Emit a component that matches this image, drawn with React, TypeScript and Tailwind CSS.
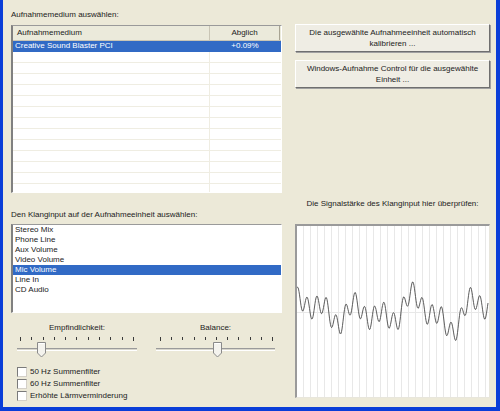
const font = "font-['Liberation_Sans',Arial,sans-serif]";

const inputs = [
  "Stereo Mix",
  "Phone Line",
  "Aux Volume",
  "Video Volume",
  "Mic Volume",
  "Line In",
  "CD Audio",
];

function wavePath() {
  const pts: string[] = [];
  for (let x = 0; x <= 191; x += 0.5) {
    const v =
      10 * Math.sin((2 * Math.PI * x) / 9.6 + 1.2) +
      9 * Math.sin((2 * Math.PI * x) / 58 + 1) +
      8 * Math.sin((2 * Math.PI * x) / 29 + 2) +
      6 * Math.sin((2 * Math.PI * x) / 87);
    pts.push(`${x === 0 ? "M" : "L"}${x.toFixed(1)},${(86 - v).toFixed(1)}`);
  }
  return pts.join(" ");
}

function Slider({
  label,
  width,
  tickOffset,
  tickWidth,
  thumb,
}: {
  label: string;
  width: number;
  tickOffset: number;
  tickWidth: number;
  thumb: number;
}) {
  return (
    <div className="flex flex-col" style={{ width }}>
      <div className="text-center h-[10px]">{label}</div>
      <div className="relative h-[24px]">
        <div
          className="absolute top-[4px] flex justify-between"
          style={{ left: tickOffset, width: tickWidth }}
        >
          {Array.from({ length: 11 }).map((_, i) => (
            <div
              key={i}
              className={`w-px bg-[#3a3a3a] ${i === 0 || i === 10 ? "h-[4px]" : "h-[3px]"}`}
            />
          ))}
        </div>
        <div className="absolute left-0 right-0 top-[15px] h-[3px] border-t border-t-[#9a9a9a] border-b border-b-white bg-[#d8d6cc]" />
        <svg
          className="absolute top-[9px]"
          style={{ left: thumb }}
          width="9"
          height="16"
          viewBox="0 0 9 16"
        >
          <polygon
            points="0.5,0.5 8.5,0.5 8.5,11 4.5,15 0.5,11"
            fill="#f4f3ee"
            stroke="#8a8a8a"
          />
          <line x1="1.5" y1="1.5" x2="7.5" y2="1.5" stroke="#ffffff" />
        </svg>
      </div>
    </div>
  );
}

function Check({ label }: { label: string }) {
  return (
    <div className="flex items-center h-[12px] pl-[6px] gap-[3px]">
      <div className="w-[10px] h-[10px] bg-white border border-t-[#7a7a7a] border-l-[#7a7a7a] border-b-[#d4d0c8] border-r-[#d4d0c8]" />
      <span>{label}</span>
    </div>
  );
}

export default function App() {
  const rows = Array.from({ length: 14 });
  return (
    <div
      className={`${font} text-[8px] leading-[10px] text-[#222222] w-[500px] h-[411px] bg-[#ECE9D8] border-l-[3px] border-r-[4px] border-b-[4px] border-[#0a3ed8] flex pl-[8px] gap-[13px] overflow-hidden`}
    >
      {/* left column */}
      <div className="w-[271px] flex flex-col pt-[10px]">
        <div className="h-[10px]">Aufnahmemedium auswählen:</div>
        <div className="mt-[5px] h-[168px] bg-white border-l-2 border-l-[#808080] border-t border-t-[#9a9a9a] border-r border-r-white border-b border-b-white overflow-hidden flex flex-col">
          <div className="flex h-[15px] bg-[#EBEADB] border-b border-b-[#c9c5b5] shrink-0">
            <div className="w-[197px] pl-[4px] flex items-center border-r border-r-[#c9c5b5]">
              Aufnahmemedium
            </div>
            <div className="w-[70px] flex items-center justify-center border-r border-r-[#a8a493]">
              Abglich
            </div>
          </div>
          {rows.map((_, i) => (
            <div
              key={i}
              className={`flex h-[11px] shrink-0 border-b ${
                i === 0 ? "bg-[#316AC5] text-white border-b-[#316AC5]" : "border-b-[#EFEDE2]"
              }`}
            >
              <div
                className={`w-[197px] pl-[2px] flex items-center ${
                  i === 0 ? "" : "border-r border-r-[#EFEDE2]"
                }`}
              >
                {i === 0 ? "Creative Sound Blaster PCI" : ""}
              </div>
              <div className="w-[70px] flex items-center justify-center">
                {i === 0 ? "+0.09%" : ""}
              </div>
            </div>
          ))}
        </div>

        <div className="mt-[17px] h-[10px]">
          Den Klanginput auf der Aufnahmeeinheit auswählen:
        </div>
        <div className="mt-[4px] h-[89px] bg-white border-l-2 border-l-[#808080] border-t border-t-[#9a9a9a] border-r border-r-white border-b border-b-white flex flex-col overflow-hidden">
          {inputs.map((name) => (
            <div
              key={name}
              className={`h-[10px] pl-[2px] flex items-center shrink-0 ${
                name === "Mic Volume" ? "bg-[#316AC5] text-white" : ""
              }`}
            >
              {name}
            </div>
          ))}
        </div>

        <div className="mt-[10px] flex pl-[6px] gap-[19px]">
          <Slider
            label="Empfindlichkeit:"
            width={120}
            tickOffset={3}
            tickWidth={114}
            thumb={20}
          />
          <Slider
            label="Balance:"
            width={119}
            tickOffset={4}
            tickWidth={113}
            thumb={57}
          />
        </div>

        <div className="mt-[9px] flex flex-col">
          <Check label="50 Hz Summenfilter" />
          <Check label="60 Hz Summenfilter" />
          <Check label="Erhöhte Lärmverminderung" />
        </div>
      </div>

      {/* right column */}
      <div className="w-[195px] flex flex-col pt-[24px]">
        <button className="h-[28px] w-full bg-[#EFEDE4] border border-t-white border-l-white border-r-[#6f6f6f] border-b-[#6f6f6f] shadow-[1px_1px_0_#a0a0a0] leading-[11px] text-center">
          Die ausgewählte Aufnahmeeinheit automatisch
          <br />
          kalibrieren ...
        </button>
        <button className="mt-[8px] h-[28px] w-full bg-[#EFEDE4] border border-t-white border-l-white border-r-[#6f6f6f] border-b-[#6f6f6f] shadow-[1px_1px_0_#a0a0a0] leading-[11px] text-center">
          Windows-Aufnahme Control für die ausgewählte
          <br />
          Einheit ...
        </button>

        <div className="mt-[111px] h-[10px] text-center">
          Die Signalstärke des Klanginput hier überprüfen:
        </div>
        <div className="mt-[15px] h-[174px] bg-white border-l-2 border-t-2 border-l-[#9a9a9a] border-t-[#9a9a9a] border-r border-b border-r-[#e8e6dc] border-b-[#e8e6dc] overflow-hidden">
          <svg width="192" height="171" viewBox="0 0 192 171">
            {Array.from({ length: 28 }).map((_, i) => (
              <line
                key={i}
                x1={6.5 + i * 7}
                y1="0"
                x2={6.5 + i * 7}
                y2="171"
                stroke="#e8e8e8"
              />
            ))}
            <line x1="0" y1="86.5" x2="192" y2="86.5" stroke="#e8e8e8" />
            <path d={wavePath()} fill="none" stroke="#4a4a4a" strokeWidth="0.9" />
          </svg>
        </div>
      </div>
    </div>
  );
}
